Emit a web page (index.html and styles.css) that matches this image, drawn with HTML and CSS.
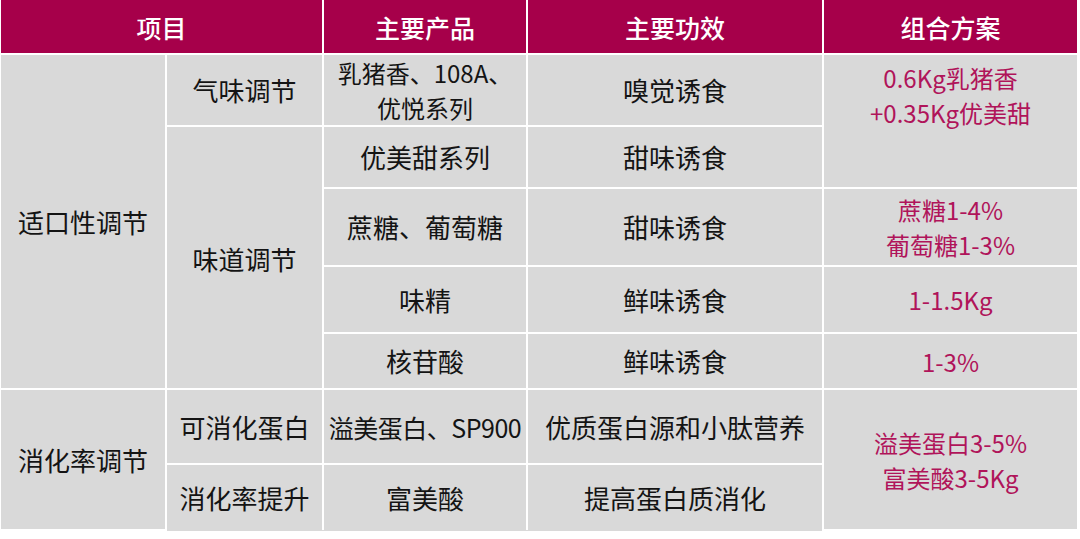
FILE: index.html
```html
<!DOCTYPE html>
<html lang="zh">
<head>
<meta charset="utf-8">
<title>适口性与消化率调节</title>
<link rel="stylesheet" href="styles.css">
</head>
<body>
<table class="plan">
  <colgroup>
    <col class="c1"><col class="c2"><col class="c3"><col class="c4"><col class="c5">
  </colgroup>
  <thead>
    <tr class="r-head">
      <th colspan="2">项目</th>
      <th>主要产品</th>
      <th>主要功效</th>
      <th>组合方案</th>
    </tr>
  </thead>
  <tbody>
    <tr class="r1">
      <td rowspan="5">适口性调节</td>
      <td>气味调节</td>
      <td class="tight">乳猪香、108A、<br>优悦系列</td>
      <td>嗅觉诱食</td>
      <td rowspan="2" class="combo top">0.6Kg乳猪香<br>+0.35Kg优美甜</td>
    </tr>
    <tr class="r2">
      <td rowspan="4" class="down">味道调节</td>
      <td>优美甜系列</td>
      <td>甜味诱食</td>
    </tr>
    <tr class="r3">
      <td>蔗糖、葡萄糖</td>
      <td>甜味诱食</td>
      <td class="combo">蔗糖1-4%<br>葡萄糖1-3%</td>
    </tr>
    <tr class="r4">
      <td>味精</td>
      <td>鲜味诱食</td>
      <td class="combo">1-1.5Kg</td>
    </tr>
    <tr class="r5">
      <td>核苷酸</td>
      <td>鲜味诱食</td>
      <td class="combo">1-3%</td>
    </tr>
    <tr class="r6">
      <td rowspan="2">消化率调节</td>
      <td>可消化蛋白</td>
      <td class="narrow">溢美蛋白、SP900</td>
      <td>优质蛋白源和小肽营养</td>
      <td rowspan="2" class="combo">溢美蛋白3-5%<br>富美酸3-5Kg</td>
    </tr>
    <tr class="r7">
      <td>消化率提升</td>
      <td>富美酸</td>
      <td>提高蛋白质消化</td>
    </tr>
  </tbody>
</table>
</body>
</html>
```

FILE: styles.css
```css
html, body {
  margin: 0;
  padding: 0;
  background: #ffffff;
}

body {
  padding: 0 3px 0 1px;
  font-family: "Noto Sans CJK SC", "Noto Sans", sans-serif;
}

.plan {
  width: 1076px;
  table-layout: fixed;
  border-collapse: collapse;
  background: #d9d9d9;
}

.c1 { width: 165px; }
.c2 { width: 157px; }
.c3 { width: 204px; }
.c4 { width: 296px; }
.c5 { width: 254px; }

.plan th,
.plan td {
  border: 2px solid #ffffff;
  padding: 0;
  text-align: center;
  vertical-align: middle;
  font-size: 26px;
  line-height: 38px;
  color: #141414;
  font-weight: 400;
  white-space: nowrap;
}

.plan thead tr th {
  border-top: 0;
  background: #a6004a;
  color: #ffffff;
  font-weight: 500;
  font-size: 25px;
}

.plan tr > :first-child { border-left: 0; }
.plan tr > :last-child { border-right: 0; }
.plan tbody tr:last-child td { border-bottom: 0; }

.r-head { height: 54px; }
.r1 { height: 72px; }
.r2 { height: 62px; }
.r3 { height: 78px; }
.r4 { height: 67px; }
.r5 { height: 56px; }
.r6 { height: 75px; }
.r7 { height: 66px; }

.plan td.tight {
  font-size: 24px;
  line-height: 35px;
}

.plan td.narrow {
  font-size: 25px;
  letter-spacing: -0.5px;
}

.plan td.down {
  padding-top: 2px;
}

.plan td.combo {
  color: #b0145a;
  font-size: 24px;
  line-height: 35px;
}

.plan td.combo.top {
  vertical-align: top;
  padding-top: 5px;
}
```
